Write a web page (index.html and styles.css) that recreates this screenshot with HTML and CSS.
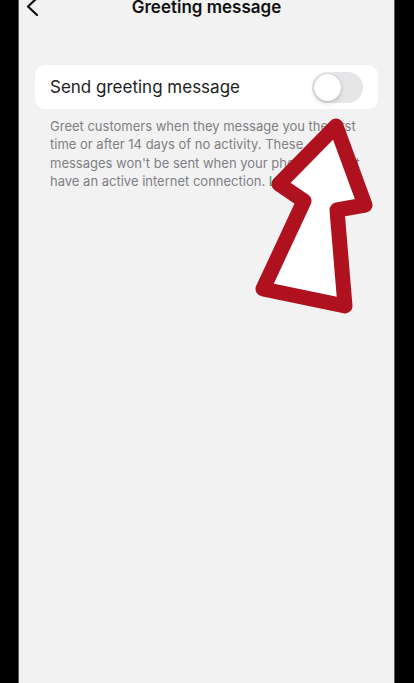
FILE: index.html
```html
<!DOCTYPE html>
<html lang="en">
<head>
    <meta charset="UTF-8">
    <meta name="viewport" content="width=device-width, initial-scale=1.0">
    <title>Greeting message</title>
    <link rel="stylesheet" href="styles.css">
</head>
<body>
    <div class="screen">
        <header class="top-bar">
            <button class="back-btn" aria-label="Back">
                <svg width="14" height="20" viewBox="0 0 14 20">
                    <path d="M11 1 L2 9.5 L11 18" fill="none" stroke="#111" stroke-width="2.2" stroke-linecap="round" stroke-linejoin="round"/>
                </svg>
            </button>
            <h1 class="title">Greeting message</h1>
            <span></span>
        </header>

        <div class="setting-card">
            <span class="setting-label">Send greeting message</span>
            <span class="switch"><span class="knob"></span></span>
        </div>

        <p class="hint">Greet customers when they message you the first time or after 14 days of no activity. These messages won't be sent when your phone doesn't have an active internet connection. <a href="#" class="link">Learn more</a></p>

        <!-- red pointer drawn over the toggle -->
        <svg class="pointer" width="140" height="230" viewBox="250 100 140 230">
            <path d="M336 126 L365 205 L337 210 L345 306 L263 289 L304 201 L279 184 Z" fill="#fff" stroke="#b0111f" stroke-width="15" stroke-linejoin="round"/>
        </svg>
    </div>
</body>
</html>
```

FILE: styles.css
```css
body {
    margin: 0;
    background-color: #000;
    font-family: Inter, "Noto Sans", sans-serif;
}
.screen {
    position: relative;
    width: 375px;
    height: 683px;
    margin-left: 18px;
    background-color: #f2f2f2;
    border-left: 1px solid #5a5a5a;
    border-right: 1px solid #5a5a5a;
    overflow: hidden;
}
.top-bar {
    display: grid;
    grid-template-columns: 60px 1fr 60px;
    align-items: center;
    height: 22px;
    margin-top: -4px;
}
.back-btn {
    border: none;
    background: none;
    padding: 0 0 0 7px;
    margin: 0;
    display: flex;
    align-items: center;
    justify-content: flex-start;
    cursor: pointer;
}
.title {
    margin: 0;
    text-align: center;
    font-size: 17px;
    font-weight: 600;
    color: #111;
    line-height: 22px;
}
.setting-card {
    display: flex;
    align-items: center;
    justify-content: space-between;
    height: 44px;
    margin: 47px 16px 0 16px;
    padding: 0 15px;
    background-color: #fff;
    border-radius: 10px;
}
.setting-label {
    font-size: 17px;
    color: #222;
}
.switch {
    display: flex;
    align-items: center;
    width: 51px;
    height: 31px;
    border-radius: 16px;
    background-color: #e6e6e8;
    padding: 2px;
    box-sizing: border-box;
}
.knob {
    width: 27px;
    height: 27px;
    border-radius: 50%;
    background-color: #fff;
    box-shadow: 0 2px 5px rgba(0, 0, 0, 0.18), 0 0 1px rgba(0, 0, 0, 0.2);
}
.hint {
    margin: 8px 16px 0 16px;
    padding: 0 15px;
    font-size: 13px;
    line-height: 18.3px;
    color: #7f7f84;
}
.link {
    color: #1da05a;
    text-decoration: none;
}
.pointer {
    position: absolute;
    left: 231px;
    top: 100px;
}
```
